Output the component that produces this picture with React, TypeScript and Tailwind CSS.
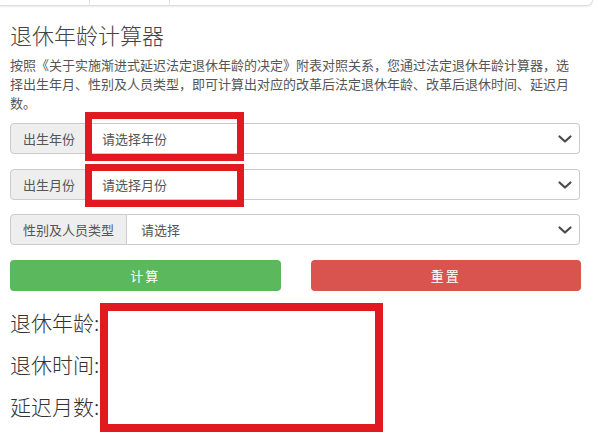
import React from "react";

function Chevron() {
  return (
    <svg width="16" height="10" viewBox="0 0 16 10" className="shrink-0">
      <polyline points="2.5,2.5 8,7.5 13.5,2.5" fill="none" stroke="#4a4a4a" strokeWidth="2.2" strokeLinecap="round" strokeLinejoin="round" />
    </svg>
  );
}

function SelectRow({ label, placeholder, className }: { label: string; placeholder: string; className?: string }) {
  return (
    <div className={"flex h-[31px] w-[570px] " + (className ?? "")}>
      <div className="flex items-center px-3 bg-[#eeeeee] border border-[#cccccc] rounded-l-[4px] text-[13px] text-[#555555] whitespace-nowrap">
        {label}
      </div>
      <div className="flex flex-1 items-center justify-between pl-[14px] pr-[6px] border border-l-0 border-[#cccccc] rounded-r-[4px] bg-white text-[13px] text-[#555555]">
        <span>{placeholder}</span>
        <Chevron />
      </div>
    </div>
  );
}

export default function App() {
  return (
    <div
      className="relative w-[598px] h-[444px] overflow-hidden bg-white"
      style={{ fontFamily: '"Noto Sans CJK SC", "Noto Sans", sans-serif' }}
    >
      <div className="flex h-[6px] w-[593px] border-b border-r border-[#dddddd] rounded-br-[6px] shadow-[0_1px_2px_rgba(0,0,0,0.08)]">
        <div className="w-[90px] border-r border-[#e2e2e2]" />
        <div className="w-[80px] border-r border-[#e2e2e2]" />
      </div>
      <div className="px-[10px]">
        <h1 className="mt-[15px] text-[22px] leading-[26px] text-[#444444] font-light">退休年龄计算器</h1>
        <p className="mt-[8px] w-[570px] text-[13px] leading-[19px] text-[#555555]">
          按照《关于实施渐进式延迟法定退休年龄的决定》附表对照关系，您通过法定退休年龄计算器，选择出生年月、性别及人员类型，即可计算出对应的改革后法定退休年龄、改革后退休时间、延迟月数。
        </p>
        <SelectRow className="mt-[11px]" label="出生年份" placeholder="请选择年份" />
        <SelectRow className="mt-[15px]" label="出生月份" placeholder="请选择月份" />
        <SelectRow className="mt-[14px]" label="性别及人员类型" placeholder="请选择" />
        <div className="mt-[15px] flex w-[571px] gap-[30px]">
          <button className="flex-1 h-[31px] rounded-[4px] bg-[#5cb85c] text-white text-[13px] tracking-[2px]">计算</button>
          <button className="flex-1 h-[31px] rounded-[4px] bg-[#d9534f] text-white text-[13px] tracking-[2px]">重置</button>
        </div>
        <div className="mt-[10px] text-[21px] leading-[42px] text-[#333333] font-light">
          <div>退休年龄:</div>
          <div>退休时间:</div>
          <div>延迟月数:</div>
        </div>
      </div>
      <div className="absolute left-[85px] top-[112px] w-[159px] h-[49px] border-[7px] border-[#e01a1f]" />
      <div className="absolute left-[85px] top-[164px] w-[159px] h-[43px] border-[7px] border-[#e01a1f]" />
      <div className="absolute left-[100px] top-[303px] w-[283px] h-[129px] border-[8px] border-[#e01a1f]" />
    </div>
  );
}
